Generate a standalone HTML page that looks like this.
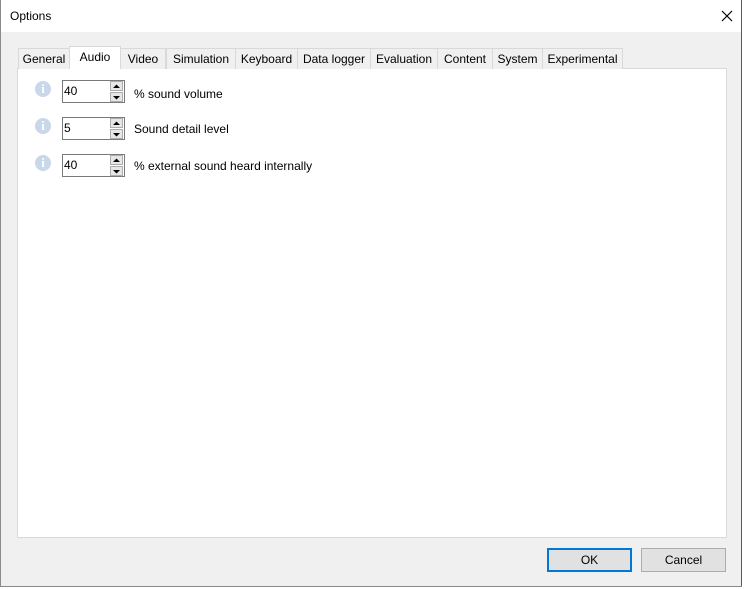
<!DOCTYPE html>
<html><head><style>
body{margin:0;width:744px;height:589px;background:#fff;position:relative;overflow:hidden;font-family:"Liberation Sans",sans-serif;font-size:12px;color:#000}
.win{position:absolute;left:0;top:0;width:742px;height:587px;background:#f0f0f0}
.bl{position:absolute;left:0;top:0;width:1px;height:587px;background:#8a8a8a;z-index:5}
.br{position:absolute;left:741px;top:0;width:1px;height:587px;background:#5a5a5a;z-index:5}
.bb{position:absolute;left:0;top:586px;width:742px;height:1px;background:#8a8a8a;z-index:5}
.title{position:absolute;left:0;top:0;width:741px;height:32px;background:#fff}
.title span{position:absolute;left:10px;top:9px;font-size:12px}
.x{position:absolute;left:721px;top:10px}
.panel{position:absolute;left:17px;top:68px;width:710px;height:470px;background:#fff;border:1px solid #d9d9d9;box-sizing:border-box}
.tab{position:absolute;top:48px;height:21px;border:1px solid #d9d9d9;border-bottom:none;box-sizing:border-box;background:#f0f0f0;text-align:center;line-height:20px;font-size:12px}
.tab.sel{top:46px;height:23px;background:#fff;line-height:20px;z-index:2}
.info{position:absolute;left:35px;width:16px;height:16px;border-radius:50%;background:#c9d7ea;color:#fff;font-weight:bold;font-size:13px;text-align:center;line-height:16px;font-family:"Liberation Serif",serif}
.spin{position:absolute;left:62px;width:63px;height:23px;border:1px solid #7a7a7a;box-sizing:border-box;background:#fff}
.spin span{position:absolute;left:1px;top:3px}
.b{position:absolute;left:47px;width:13px;height:10px;background:#e6e6e6;border:1px solid #adadad;box-sizing:border-box}
.lbl{position:absolute;left:134px}
.btn{position:absolute;top:548px;width:85px;height:24px;box-sizing:border-box;background:#e1e1e1;border:1px solid #adadad;text-align:center;line-height:22px}
</style></head><body>
<div class="win">
<div class="title"><span>Options</span>
<svg class="x" width="12" height="12"><path d="M1 1L11 11M11 1L1 11" stroke="#000" stroke-width="1.2"/></svg></div>
<div class="panel"></div>
<div class="tab" style="left:18px;width:52px">General</div>
<div class="tab sel" style="left:69px;width:52px">Audio</div>
<div class="tab" style="left:120px;width:46px">Video</div>
<div class="tab" style="left:166px;width:70px">Simulation</div>
<div class="tab" style="left:235px;width:63px">Keyboard</div>
<div class="tab" style="left:297px;width:74px">Data logger</div>
<div class="tab" style="left:370px;width:68px">Evaluation</div>
<div class="tab" style="left:437px;width:56px">Content</div>
<div class="tab" style="left:492px;width:51px">System</div>
<div class="tab" style="left:542px;width:81px">Experimental</div>

<div class="info" style="top:81px">i</div>
<div class="spin" style="top:80px"><span>40</span><div class="b" style="top:0"></div><div class="b" style="top:11px"></div>
<svg style="position:absolute;left:49px;top:2px" width="9" height="18"><path d="M1 5L4.5 1.5L8 5Z M1 13L4.5 16.5L8 13Z" fill="#000"/></svg></div>
<div class="lbl" style="top:87px">% sound volume</div>

<div class="info" style="top:118px">i</div>
<div class="spin" style="top:117px"><span>5</span><div class="b" style="top:0"></div><div class="b" style="top:11px"></div>
<svg style="position:absolute;left:49px;top:2px" width="9" height="18"><path d="M1 5L4.5 1.5L8 5Z M1 13L4.5 16.5L8 13Z" fill="#000"/></svg></div>
<div class="lbl" style="top:122px">Sound detail level</div>

<div class="info" style="top:155px">i</div>
<div class="spin" style="top:154px"><span>40</span><div class="b" style="top:0"></div><div class="b" style="top:11px"></div>
<svg style="position:absolute;left:49px;top:2px" width="9" height="18"><path d="M1 5L4.5 1.5L8 5Z M1 13L4.5 16.5L8 13Z" fill="#000"/></svg></div>
<div class="lbl" style="top:159px">% external sound heard internally</div>

<div class="btn" style="left:547px;border:2px solid #0078d7;line-height:20px">OK</div>
<div class="btn" style="left:641px">Cancel</div>
<div class="bl"></div><div class="br"></div><div class="bb"></div>
</div>
</body></html>
